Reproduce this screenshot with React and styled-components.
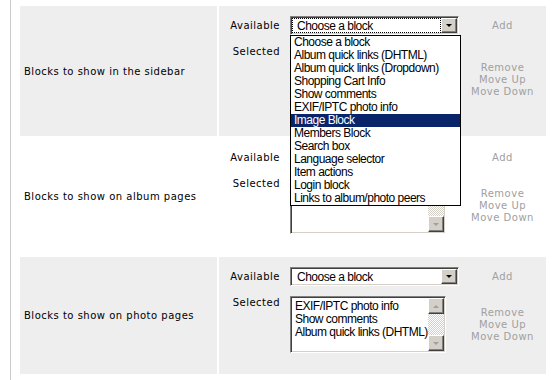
import React from 'react';
import styled, { createGlobalStyle } from 'styled-components';

const GlobalStyle = createGlobalStyle`
  html, body {
    margin: 0;
    padding: 0;
    background: #fff;
  }
`;

const Page = styled.div`
  margin-left: 10px;
  border-left: 1px solid #cccccc;
  min-height: 380px;
  padding: 6px 0 0 9px;
  box-sizing: border-box;
`;

const BlockRow = styled.div`
  display: grid;
  grid-template-columns: 197px 327px;
  column-gap: 2px;
  margin-bottom: 2px;
  position: relative;
  z-index: ${p => (p.$open ? 2 : 1)};
`;

const LabelCell = styled.div`
  background: ${p => (p.$shade ? '#eeeeee' : '#ffffff')};
  display: flex;
  align-items: center;
  padding-left: 4px;
  font-family: 'DejaVu Sans', Verdana, sans-serif;
  font-size: 10px;
  letter-spacing: 0.5px;
  color: #000;
`;

const ControlCell = styled.div`
  background: ${p => (p.$shade ? '#eeeeee' : '#ffffff')};
  padding: 10px 0 21px 8px;
  display: grid;
  grid-template-columns: 63px 169px 1fr;
  grid-template-rows: 19px auto;
  row-gap: 10px;
`;

const FieldLabel = styled.div`
  font-family: 'DejaVu Sans', Verdana, sans-serif;
  font-size: 10px;
  letter-spacing: 0.5px;
  color: #000;
  text-align: right;
  padding-right: 10px;
  line-height: 13px;
  align-self: ${p => (p.$top ? 'start' : 'center')};
`;

const winFont = `
  font-family: 'Liberation Sans', Arial, sans-serif;
  font-size: 12px;
  letter-spacing: -0.5px;
`;

const SelectWrap = styled.div`
  position: relative;
`;

const Select = styled.div`
  ${winFont}
  box-sizing: border-box;
  height: 19px;
  width: 169px;
  background: #fff;
  border-style: solid;
  border-width: 1px;
  border-color: #808080 #ffffff #ffffff #808080;
  box-shadow: inset 1px 1px 0 #404040, inset -1px -1px 0 #d4d0c8;
  display: flex;
  align-items: stretch;
  padding: 1px;
`;

const SelectValue = styled.div`
  flex: 1;
  display: flex;
  align-items: center;
  padding-left: 4px;
  margin: 1px;
  outline: ${p => (p.$focus ? '1px dotted #000' : 'none')};
  color: #000;
  white-space: nowrap;
`;

const ArrowButton = styled.div`
  box-sizing: border-box;
  width: 16px;
  background: #d4d0c8;
  border-style: solid;
  border-width: 1px;
  border-color: #ffffff #404040 #404040 #ffffff;
  box-shadow: inset -1px -1px 0 #808080;
  display: flex;
  align-items: center;
  justify-content: center;
`;

const Triangle = styled.span`
  width: 0;
  height: 0;
  border-left: 3px solid transparent;
  border-right: 3px solid transparent;
  ${p => (p.$up ? 'border-bottom' : 'border-top')}: 3px solid ${p => (p.$disabled ? '#a0a0a0' : '#000')};
`;

const Dropdown = styled.ul`
  ${winFont}
  position: absolute;
  left: 0;
  top: 100%;
  width: 171px;
  margin: 0;
  padding: 0;
  list-style: none;
  background: #fff;
  border: 1px solid #000;
  box-sizing: border-box;
`;

const Option = styled.li`
  height: 13px;
  line-height: 13px;
  padding-left: 3px;
  white-space: nowrap;
  background: ${p => (p.$active ? '#0a246a' : 'transparent')};
  color: ${p => (p.$active ? '#fff' : '#000')};
`;

const ListBox = styled.div`
  ${winFont}
  box-sizing: border-box;
  width: 156px;
  height: ${p => p.$height}px;
  background: #fff;
  border-style: solid;
  border-width: 1px;
  border-color: #808080 #ffffff #ffffff #808080;
  box-shadow: inset 1px 1px 0 #404040, inset -1px -1px 0 #d4d0c8;
  display: flex;
  padding: 1px;
`;

const ListItems = styled.div`
  flex: 1;
  padding: 2px 0 0 3px;
  line-height: 13px;
  white-space: nowrap;
  overflow: hidden;
`;

const ScrollBar = styled.div`
  width: 16px;
  display: flex;
  flex-direction: column;
  background-color: #ffffff;
  background-image: repeating-conic-gradient(#d4d0c8 0 25%, #ffffff 0 50%);
  background-size: 2px 2px;
`;

const ScrollButton = styled(ArrowButton)`
  height: 16px;
  width: 16px;
`;

const Spacer = styled.div`
  flex: 1;
`;

const Actions = styled.div`
  font-family: 'DejaVu Sans', Verdana, sans-serif;
  font-size: 10px;
  letter-spacing: 0.5px;
  color: #a0a0a0;
  text-align: center;
  line-height: 12px;
  align-self: center;
`;

const blockNames = [
  'Choose a block',
  'Album quick links (DHTML)',
  'Album quick links (Dropdown)',
  'Shopping Cart Info',
  'Show comments',
  'EXIF/IPTC photo info',
  'Image Block',
  'Members Block',
  'Search box',
  'Language selector',
  'Item actions',
  'Login block',
  'Links to album/photo peers'
];

const rows = [
  { label: 'Blocks to show in the sidebar', shade: true, open: true, listHeight: 70, selected: [], scroll: false },
  { label: 'Blocks to show on album pages', shade: false, listHeight: 57, selected: [], scroll: 'down' },
  {
    label: 'Blocks to show on photo pages',
    shade: true,
    listHeight: 57,
    selected: ['EXIF/IPTC photo info', 'Show comments', 'Album quick links (DHTML)'],
    scroll: 'both'
  }
];

const BlockSettings = ({ row }) => (
  <BlockRow $open={row.open}>
    <LabelCell $shade={row.shade}>{row.label}</LabelCell>
    <ControlCell $shade={row.shade}>
      <FieldLabel>Available</FieldLabel>
      <SelectWrap>
        <Select>
          <SelectValue $focus={row.open}>Choose a block</SelectValue>
          <ArrowButton>
            <Triangle />
          </ArrowButton>
        </Select>
        {row.open && (
          <Dropdown>
            {blockNames.map(name => (
              <Option key={name} $active={name === 'Image Block'}>
                {name}
              </Option>
            ))}
          </Dropdown>
        )}
      </SelectWrap>
      <Actions>Add</Actions>
      <FieldLabel $top>Selected</FieldLabel>
      <ListBox $height={row.listHeight}>
        <ListItems>
          {row.selected.map(name => (
            <div key={name}>{name}</div>
          ))}
        </ListItems>
        {row.scroll && (
          <ScrollBar>
            {row.scroll === 'both' ? (
              <ScrollButton>
                <Triangle $up $disabled />
              </ScrollButton>
            ) : (
              <Spacer />
            )}
            <Spacer />
            <ScrollButton>
              <Triangle $disabled />
            </ScrollButton>
          </ScrollBar>
        )}
      </ListBox>
      <Actions>
        Remove
        <br />
        Move Up
        <br />
        Move Down
      </Actions>
    </ControlCell>
  </BlockRow>
);

export default function App() {
  return (
    <>
      <GlobalStyle />
      <Page>
        {rows.map(row => (
          <BlockSettings key={row.label} row={row} />
        ))}
      </Page>
    </>
  );
}
